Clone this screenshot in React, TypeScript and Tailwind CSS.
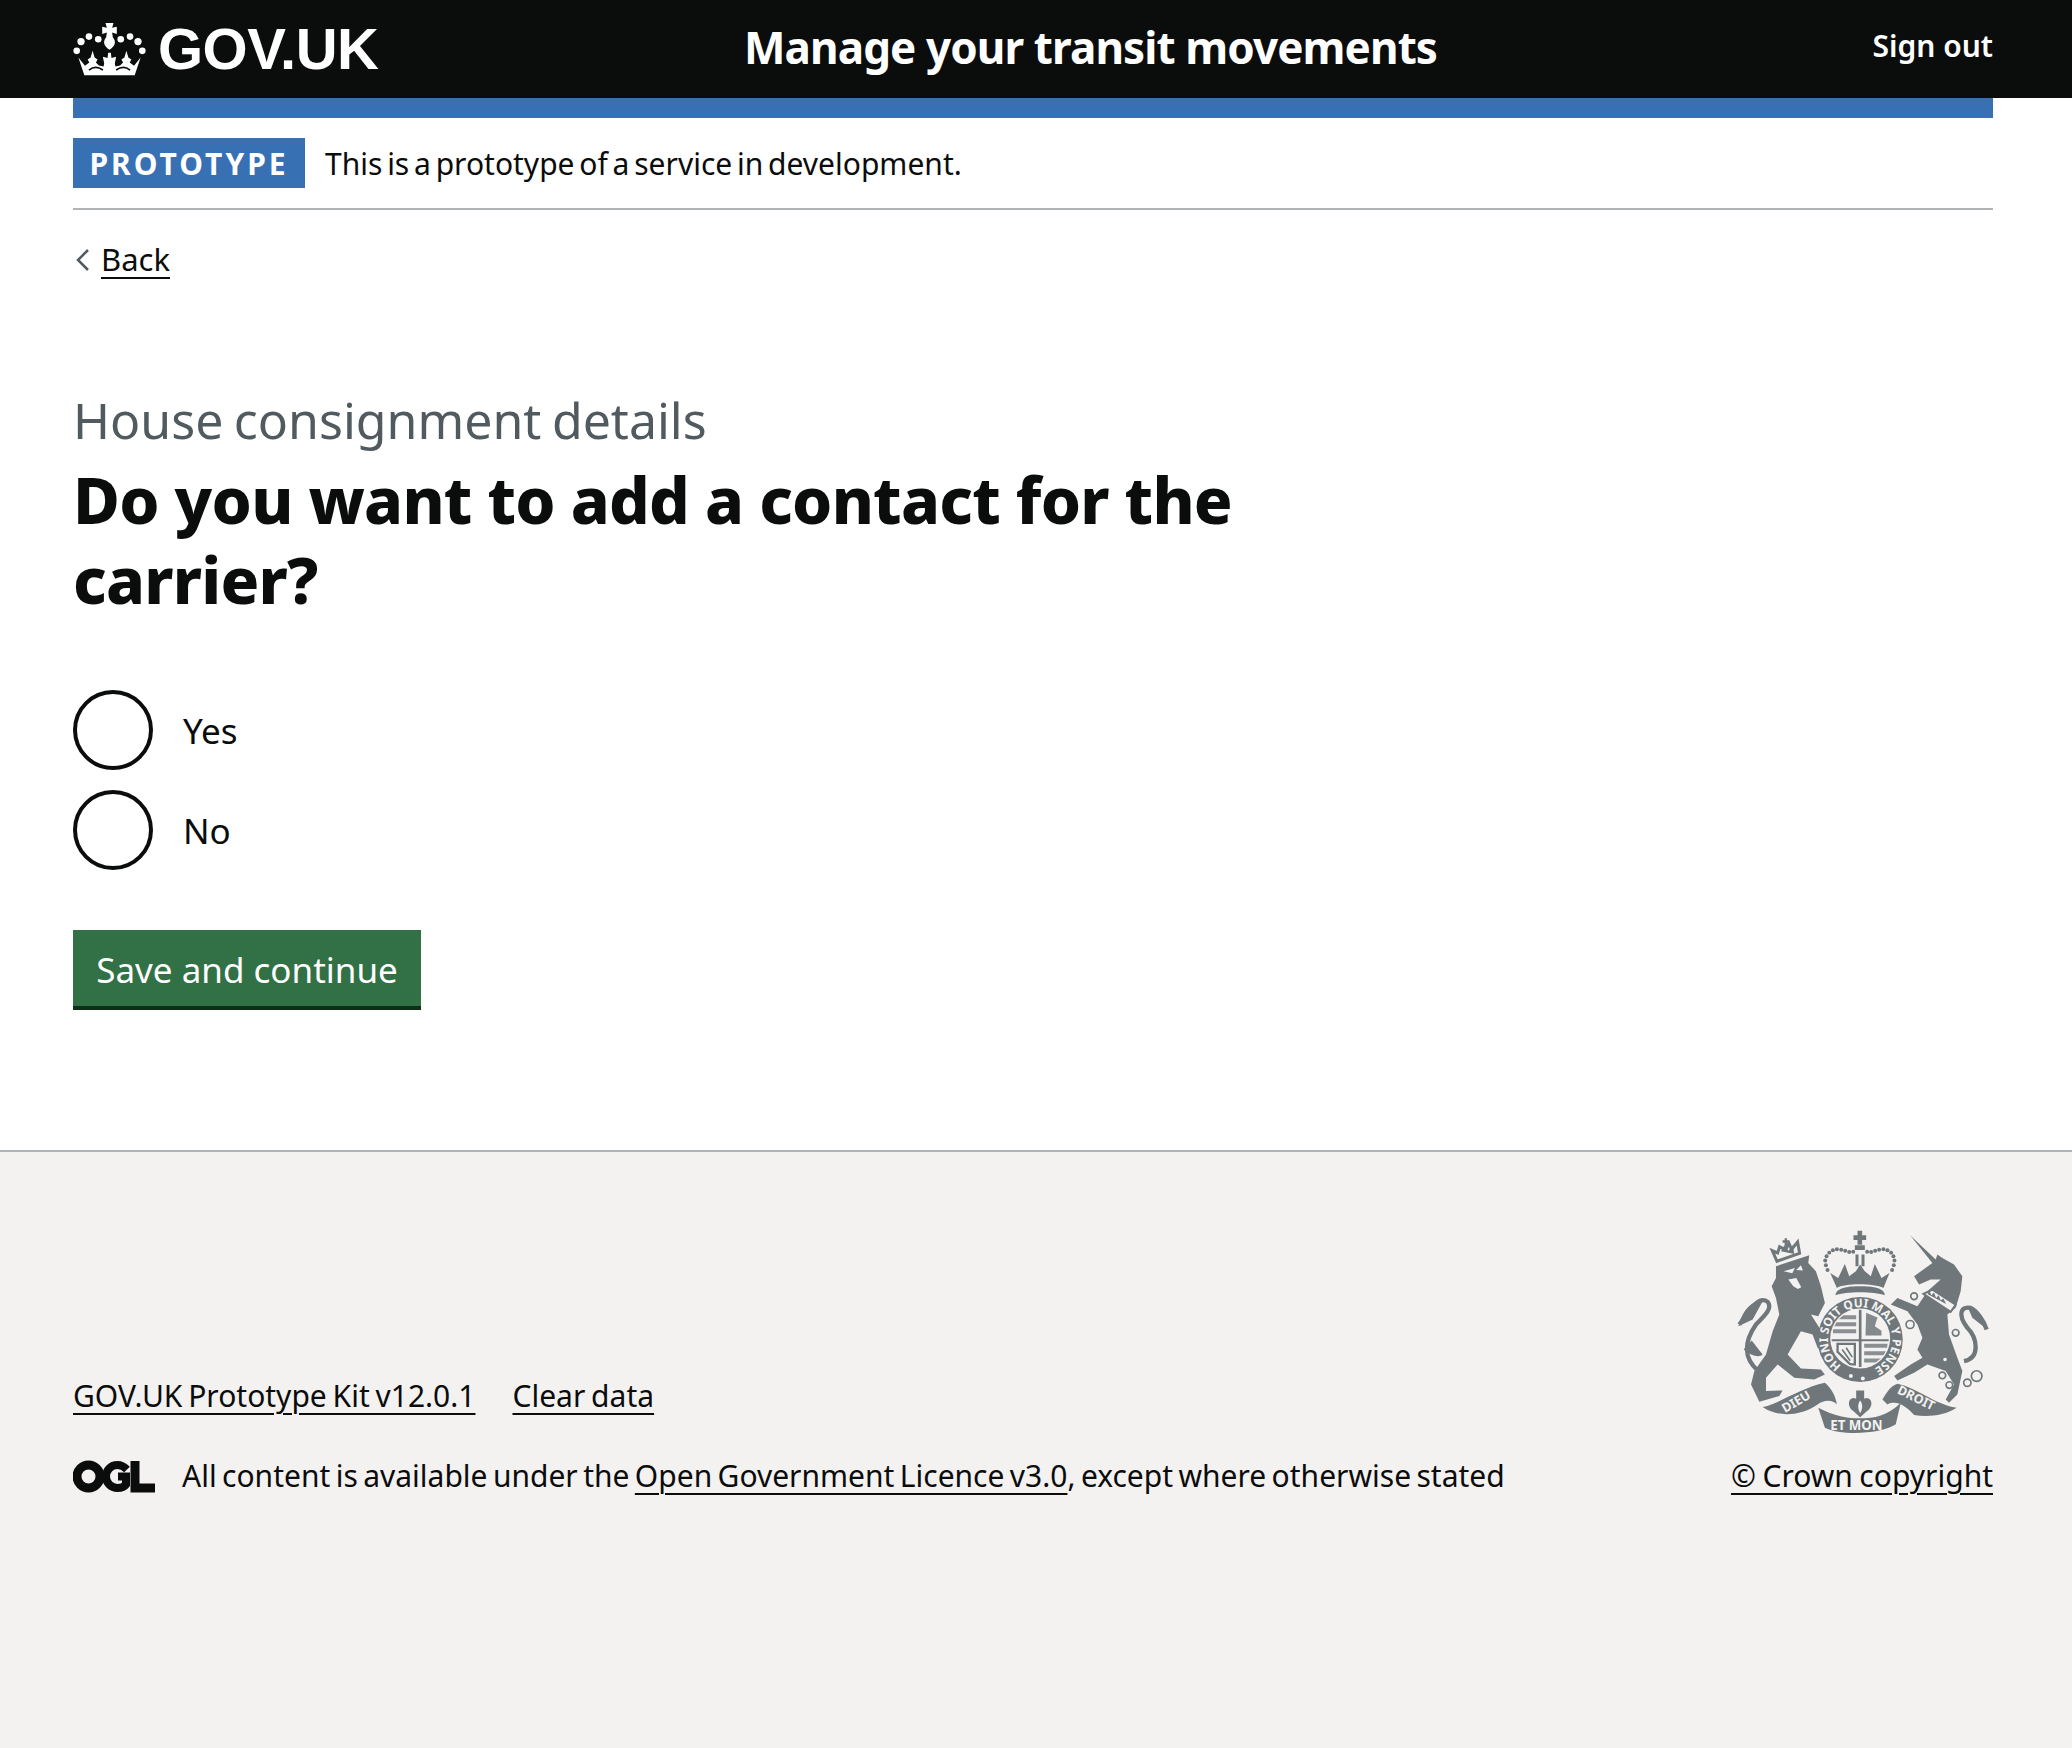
const ff = "font-['Noto_Sans',sans-serif]";

function Crown() {
  const dots: [number, number, number][] = [[62,55,10],[90,63,10],[38,70,11],[25,98,10],[186,55,10],[158,63,10],[210,70,11],[223,98,10]];
  return (
    <svg viewBox="14 14 220 160" className="w-[73px] h-[53px] shrink-0" fill="#fff">
      {dots.map(([x,y,r],i)=><circle key={i} cx={x} cy={y} r={r}/>)}
      <path d="M112 14h24l-4 14 14-3v22l-14-4 2 14c12 14 6 28-10 38-16-10-22-24-10-38l2-14-14 4V25l14 3z"/>
      <path d="M30 118L50 143L63 133L58 124L67 118L73 98L79 118L88 124L83 133L92 142L106 145L108 136L104 116L118 120L120 104H128L130 120L144 116L140 136L142 145L156 142L165 133L160 124L169 118L175 98L181 118L190 124L185 133L198 143L218 118L200 172H48Z"/>
      <path d="M62 156Q82 140 104 156M144 156Q166 140 186 156" fill="none" stroke="#0b0c0c" strokeWidth="5"/>
    </svg>
  );
}

function Ogl() {
  return (
    <svg viewBox="0 0 82 33" className="w-[82px] h-[33px] shrink-0" fill="none" stroke="#0b0c0c">
      <circle cx="15.500" cy="16.500" r="11.500" strokeWidth="9"/>
      <path d="M54 9.500C51 6.500 48 5 44.500 5 38 5 33 10 33 16.500S38 28 44.500 28c4 0 7-1.500 8.500-3.500v-8h-8" strokeWidth="8"/>
      <path d="M62 1v27h20" strokeWidth="9"/>
    </svg>
  );
}

function Arms() {
  const g = "#6f777b";
  const bg = "#f3f2f1";
  const font = "Noto Sans, sans-serif";
  const ring = [[375,172],[373,158],[377,145],[385,134],[396,127],[408,124],[421,125],[433,128],[445,132],[457,131],[499,131],[511,132],[523,128],[535,125],[548,124],[560,127],[571,134],[578,145],[581,158],[579,172],[380,186],[574,186]];
  return (
    <svg viewBox="105 60 760 625" className="w-[253px] h-[208px] mr-[4px]" fill={g}>
      {/* lion */}
      <path d="M225 175L325 142L322 165L345 190L360 235L372 285L352 325L330 320L378 395L388 428L350 420L335 380L300 370L260 440L300 482L360 485L372 500L340 515L280 510L230 470L195 510L195 550L245 548L235 565L175 582L150 530L160 490L195 440L215 370L235 320L225 270L212 235L225 210Z"/>
      <path d="M172 490C125 450 130 400 165 350C195 320 215 300 200 282C175 262 150 300 115 350" fill="none" stroke={g} strokeWidth="13"/>
      <path d="M112 355C125 300 160 275 185 280L155 335ZM128 425C150 445 175 450 185 440L152 398Z"/>
      <path d="M248 190l34-10-8 16zM300 172l-14 14 20 2zM262 215l24-5 15 28-10 5-14-8z" fill={bg}/>
      <path d="M228 160L214 128L230 135L236 116L254 126L264 106L272 124L290 102L296 136Z" fill={bg} stroke={g} strokeWidth="9"/>
      <path d="M240 130L250 112L262 128L276 112L280 138Z"/>
      <path d="M245 97h6v-6h7v6h6v7h-6v12h-7v-12h-6z"/>
      {/* unicorn */}
      <path d="M628 82L705 155L710 140L725 150L760 170L785 205L780 250L765 300L740 320L745 380L770 450L785 490L770 560L745 585L735 575L760 530L735 490L680 470L640 495L590 518L580 505L630 470L665 450L650 425L665 390L650 350L620 310L570 290L590 270L650 295L680 250L720 215L690 215L655 230L640 205L695 165Z"/>
      <path d="M790 460C840 450 830 390 800 360C770 320 780 295 810 300C830 310 850 340 858 365" fill="none" stroke={g} strokeWidth="13"/>
      <path d="M800 295C830 295 850 330 860 365L815 330Z"/>
      <path d="M668 258L695 245L765 290L750 312Z" fill={bg} stroke={g} strokeWidth="6"/>
      <path d="M680 258l6-10 6 14 8-8 6 16 8-8 6 16 8-6 8 16z"/>
      {[[640,265,10],[628,350,12],[765,375,10],[733,455,8],[725,503,10],[746,532,10],[800,525,11],[828,505,16]].map(([x,y,r],i)=>(
        <circle key={i} cx={x} cy={y} r={r} fill={bg} stroke={g} strokeWidth="5"/>
      ))}
      {/* royal crown */}
      <path d="M470 68h14v14h12v14h-12v14h-14V96h-12V82h12z"/>
      <path d="M462 112h30v14h-30zM464 140h9v35h-9zM482 140h9v35h-9z"/>
      {ring.map(([x,y],i)=>(<circle key={i} cx={x} cy={y} r="6"/>))}
      <path d="M388 195L412 210L432 168L445 205L465 190L478 170L492 190L510 205L522 168L542 210L566 195L548 240C520 225 430 225 408 240Z"/>
      <path d="M404 262C405 240 440 235 478 235C516 235 552 240 552 262C520 250 435 250 404 262Z"/>
      {/* shield */}
      <circle cx="478" cy="395" r="128"/>
      <circle cx="478" cy="392" r="90" fill={bg}/>
      <defs><clipPath id="sh"><circle cx="478" cy="392" r="86"/></clipPath></defs>
      <g clipPath="url(#sh)">
        <path d="M474 300h8v190h-8zM385 394h186v6H385z"/>
        <path d="M396 322h70v12h-70zM396 343h70v12h-70zM396 364h70v12h-70zM490 408h70v12h-70zM490 430h66v12h-66zM490 452h56v12h-56z" opacity="0.8"/>
        <path d="M496 315l34 14-8 26 20 14 0 14h-48z" opacity="0.85"/>
        <path d="M410 408h52v62h-14L410 432z" fill="none" stroke={g} strokeWidth="7"/>
        <path d="M424 425l24 34M436 420l18 28" stroke={g} strokeWidth="5"/>
      </g>
      <path id="gart" d="M422 474A97 97 0 1 1 526 479" fill="none"/>
      <text fontFamily={font} fontSize="36" fontWeight="700" fill={bg} textLength="505" lengthAdjust="spacingAndGlyphs">
        <textPath href="#gart">HONI SOIT QUI MAL Y PENSE</textPath>
      </text>
      <circle cx="450" cy="505" r="6" fill={bg}/><circle cx="486" cy="512" r="6" fill={bg}/>
      {/* motto */}
      <path d="M185 598C230 590 300 540 372 525C395 545 405 570 408 590C395 575 370 575 350 590C300 625 230 630 185 598Z"/>
      <path d="M352 600C400 625 440 632 478 632C520 632 560 625 600 585L585 650C540 680 420 685 372 660Z"/>
      <path d="M545 575C560 550 570 535 590 528C650 540 700 590 768 600C730 625 680 628 640 622C620 600 590 575 560 590Z"/>
      <path d="M466 548h24v25c22-10 32 22 8 38l-20 18-20-18c-24-16-14-48 8-38z"/>
      <path d="M478 578c-8 10-8 25 0 38 8-13 8-28 0-38z" fill={bg}/>
      <text x="388" y="668" fontFamily={font} fontSize="40" fontWeight="700" fill={bg}>ET MON</text>
      <text transform="translate(252 616) rotate(-30)" fontFamily={font} fontSize="38" fontWeight="700" fill={bg}>DIEU</text>
      <text transform="translate(587 556) rotate(26)" fontFamily={font} fontSize="38" fontWeight="700" fill={bg}>DROIT</text>
    </svg>
  );
}

function Radio({ label }: { label: string }) {
  return (
    <label className="flex items-center">
      <span className="w-[80px] h-[80px] rounded-full border-[4px] border-[#0b0c0c] shrink-0" />
      <span className="ml-[30px] pt-[2px] text-[35px] leading-[40px] text-[#0b0c0c]">{label}</span>
    </label>
  );
}

export default function App() {
  return (
    <div className={`min-h-[1748px] flex flex-col bg-white text-[#0b0c0c] ${ff}`}>
      <header className="h-[98px] bg-[#0b0c0c] text-white pl-[73px] pr-[79px] flex items-center">
        <div className="flex items-center w-[671px]">
          <Crown />
          <span className="ml-[12px] font-['Liberation_Sans',sans-serif] font-bold text-[58px] leading-none tracking-[-0.5px]">GOV.UK</span>
        </div>
        <span className="pb-[5px] text-[44px] font-bold leading-none tracking-[-0.9px]">Manage your transit movements</span>
        <span className="ml-auto pb-[6px] text-[30px] font-semibold leading-none">Sign out</span>
      </header>
      <main className="flex-1 pl-[73px] pr-[79px]">
        <div className="h-[20px] bg-[#3870b4]" />
        <div className="flex items-center h-[92px] border-b-2 border-[#b1b4b6]">
          <strong className="h-[50px] w-[232px] flex items-center justify-center bg-[#3870b4] text-white text-[30px] font-bold tracking-[3px]">PROTOTYPE</strong>
          <span className="ml-[20px] pt-[2px] text-[30px] leading-none [word-spacing:-3px]">This is a prototype of a service in development.</span>
        </div>
        <a className="flex items-center mt-[30px] h-[40px]">
          <svg width="14" height="24" viewBox="0 0 14 24" className="ml-[3px] shrink-0" fill="none" stroke="#505a5f" strokeWidth="2.500"><path d="M12 2L2 12l10 10"/></svg>
          <span className="ml-[11px] pb-[2px] text-[31px] leading-none underline decoration-2 underline-offset-[6px]">Back</span>
        </a>
        <p className="mt-[110px] text-[50px] leading-[60px] text-[#505a5f] [word-spacing:-2.500px]">House consignment details</p>
        <h1 className="mt-[10px] w-[1240px] text-[64px] leading-[80px] font-extrabold tracking-[-0.75px]">Do you want to add a contact for the carrier?</h1>
        <div className="mt-[70px] flex flex-col gap-[20px]">
          <Radio label="Yes" />
          <Radio label="No" />
        </div>
        <button className="mt-[60px] w-[348px] h-[80px] bg-[#317145] shadow-[inset_0_-4px_0_#0f2e17] text-white text-[35px] leading-none pb-[2px]">Save and continue</button>
      </main>
      <footer className="h-[598px] bg-[#f3f2f1] border-t-2 border-[#b1b4b6] pl-[73px] pr-[79px] pt-[76px]">
        <div className="flex items-end justify-between">
          <div>
            <div className="flex gap-[37px] text-[30px] leading-[40px] [word-spacing:-2px]">
              <a className="underline decoration-2 underline-offset-[6px]">GOV.UK Prototype Kit v12.0.1</a>
              <a className="underline decoration-2 underline-offset-[6px]">Clear data</a>
            </div>
            <div className="flex items-center mt-[40px] text-[30px] leading-[40px] [word-spacing:-2.400px]">
              <Ogl />
              <span className="ml-[27px]">All content is available under the <a className="underline decoration-2 underline-offset-[6px]">Open Government Licence v3.0</a>, except where otherwise stated</span>
            </div>
          </div>
          <div className="flex flex-col items-end">
            <Arms />
            <a className="mt-[20px] text-[30px] leading-[40px] underline decoration-2 underline-offset-[6px] [word-spacing:-1.300px]">© Crown copyright</a>
          </div>
        </div>
      </footer>
    </div>
  );
}
